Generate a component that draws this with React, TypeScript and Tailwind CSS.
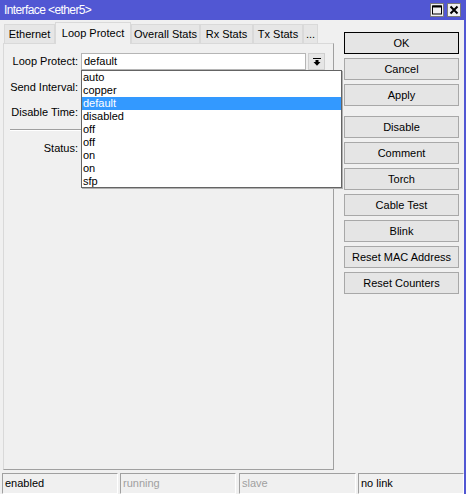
import React from 'react';

const tabs = [
  { label: 'Ethernet', w: 'w-[51px] ml-[1px]' },
  { label: 'Loop Protect', w: 'w-[76px]', active: true },
  { label: 'Overall Stats', w: 'w-[69px]' },
  { label: 'Rx Stats', w: 'w-[53px]' },
  { label: 'Tx Stats', w: 'w-[50px]' },
  { label: '...', w: 'w-[15px]' },
];

const options = ['auto', 'copper', 'default', 'disabled', 'off', 'off', 'on', 'on', 'sfp'];

const buttons = ['Disable', 'Comment', 'Torch', 'Cable Test', 'Blink', 'Reset MAC Address', 'Reset Counters'];

function TitleButton({ children }: { children: React.ReactNode }) {
  return (
    <div className="w-[14px] h-[14px] bg-[#f0f0f0] border border-[#7a7a7a] flex items-center justify-center">
      {children}
    </div>
  );
}

function Button({ label, isDefault }: { label: string; isDefault?: boolean }) {
  return (
    <button
      className={
        'h-[22px] w-full flex items-center justify-center bg-[#e5e5e5] border ' +
        (isDefault ? 'border-black' : 'border-[#a8a8a8]')
      }
    >
      {label}
    </button>
  );
}

function Row({ label, children }: { label: string; children?: React.ReactNode }) {
  return (
    <div className="flex items-center h-[17px]">
      <div className="w-[74px] text-right whitespace-nowrap">{label}</div>
      <div className="ml-[3px] flex items-stretch h-full">{children}</div>
    </div>
  );
}

export default function App() {
  return (
    <div className="w-[466px] h-[494px] bg-[#f0f0f0] border-r-2 border-[#5157d3] flex flex-col text-[11px] text-black font-['Liberation_Sans',Arial,sans-serif] overflow-hidden">
      {/* Title bar */}
      <div className="h-[20px] bg-[#5157d3] flex items-center pl-[4px] pr-[3px] text-white text-[12px] tracking-[-0.6px] shrink-0">
        <span>Interface &lt;ether5&gt;</span>
        <div className="ml-auto flex gap-[3px]">
          <TitleButton>
            <svg width="10" height="10" viewBox="0 0 10 10">
              <rect x="0.5" y="1" width="9" height="8" fill="none" stroke="#000" strokeWidth="1" />
              <rect x="0.5" y="0.5" width="9" height="2" fill="#000" />
            </svg>
          </TitleButton>
          <TitleButton>
            <svg width="10" height="10" viewBox="0 0 10 10">
              <path d="M1.5 1.5 L8.5 8.5 M8.5 1.5 L1.5 8.5" stroke="#000" strokeWidth="2" />
            </svg>
          </TitleButton>
        </div>
      </div>

      {/* Main */}
      <div className="flex-1 flex pl-[3px] pt-[2px] pb-[3px] min-h-0">
        <div className="w-[331px] flex flex-col">
          <div className="h-[21px] flex items-end shrink-0">
            {tabs.map((t) =>
              t.active ? (
                <div
                  key={t.label}
                  className={`${t.w} h-[22px] -mb-[1px] relative z-10 bg-[#f0f0f0] border border-b-0 border-[#d9d9d9] flex items-center justify-center whitespace-nowrap`}
                >
                  {t.label}
                </div>
              ) : (
                <div
                  key={t.label}
                  className={`${t.w} h-[19px] bg-[#e6e6e6] border border-b-0 border-[#d9d9d9] flex items-center justify-center whitespace-nowrap`}
                >
                  {t.label}
                </div>
              )
            )}
          </div>

          <div className="flex-1 relative border border-[#d9d9d9] border-r-[#a0a0a0] border-b-[#a0a0a0] flex flex-col">
            <div className="mt-[9px]">
              <Row label="Loop Protect:">
                <div className="w-[225px] bg-white border border-[#b5b5b5] pl-[2px] flex items-center">default</div>
                <div className="ml-[2px] w-[17px] bg-[#e6e6e6] border border-[#cfcfcf] flex items-center justify-center">
                  <svg width="8" height="8" viewBox="0 0 8 8">
                    <rect x="0" y="0" width="8" height="1" fill="#000" />
                    <rect x="2.5" y="2" width="3" height="2" fill="#000" />
                    <path d="M0.5 4 L7.5 4 L4 7.8 Z" fill="#000" />
                  </svg>
                </div>
              </Row>
            </div>
            <div className="mt-[9px]">
              <Row label="Send Interval:">
                <div className="w-[225px] bg-white border border-[#b5b5b5]" />
              </Row>
            </div>
            <div className="mt-[8px]">
              <Row label="Disable Time:">
                <div className="w-[225px] bg-white border border-[#b5b5b5]" />
              </Row>
            </div>
            <div className="mt-[8px] mx-[6px] h-[2px] border-t border-[#a0a0a0] border-b border-b-white" />
            <div className="mt-[9px]">
              <Row label="Status:" />
            </div>

            {/* Open dropdown list */}
            <div className="absolute left-[77px] top-[26px] w-[261px] h-[118px] bg-white border border-[#646464] shadow-[1px_1px_0_#b0b0b0] z-20">
              {options.map((o, i) => (
                <div
                  key={i}
                  className={
                    'h-[13px] leading-[13px] pl-[1px] ' + (o === 'default' ? 'bg-[#3399ff] text-white' : '')
                  }
                >
                  {o}
                </div>
              ))}
            </div>
          </div>
        </div>

        {/* Buttons */}
        <div className="ml-[10px] mt-[10px] w-[115px] flex flex-col gap-[4px]">
          <Button label="OK" isDefault />
          <Button label="Cancel" />
          <Button label="Apply" />
          <div className="mt-[6px] flex flex-col gap-[4px]">
            {buttons.map((b) => (
              <Button key={b} label={b} />
            ))}
          </div>
        </div>
      </div>

      {/* Status bar */}
      <div className="h-[21px] flex pl-[2px] shrink-0">
        <div className="w-[116px] border border-[#a0a0a0] border-r-white border-b-white pl-[2px] flex items-center">enabled</div>
        <div className="ml-[2px] w-[116px] border border-[#a0a0a0] border-r-white border-b-white pl-[2px] flex items-center text-[#a0a0a0]">running</div>
        <div className="ml-[3px] w-[117px] border border-[#a0a0a0] border-r-white border-b-white pl-[2px] flex items-center text-[#a0a0a0]">slave</div>
        <div className="ml-[2px] flex-1 border border-[#a0a0a0] border-r-white border-b-white pl-[2px] flex items-center">no link</div>
      </div>
    </div>
  );
}
